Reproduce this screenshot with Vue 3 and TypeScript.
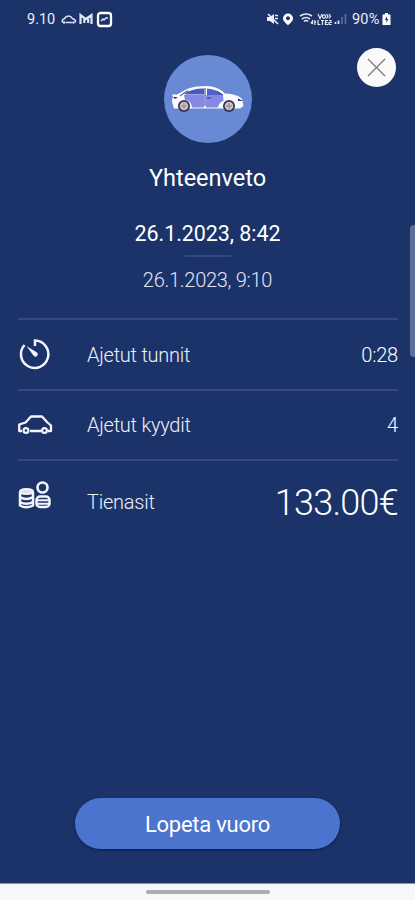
<script setup lang="ts">
interface SummaryRow {
  icon: 'timer' | 'car' | 'coins'
  label: string
  value: string
}

const startTime = '26.1.2023, 8:42'
const endTime = '26.1.2023, 9:10'

const rows: SummaryRow[] = [
  { icon: 'timer', label: 'Ajetut tunnit', value: '0:28' },
  { icon: 'car', label: 'Ajetut kyydit', value: '4' },
  { icon: 'coins', label: 'Tienasit', value: '133.00€' },
]
</script>

<template>
  <div class="screen">
    <header class="status">
      <div class="status-left">
        <span class="clock">9.10</span>
        <svg class="notifications" width="54" height="18" viewBox="0 0 54 18" fill="none" stroke="#dfe4f2">
          <path d="M2.500 12.500Q1.500 9.500 4 9Q6 6 8.500 6Q11 6 12.500 8.700Q16 9.300 15.500 12.500M5.500 12.500H12" stroke-width="1.500" />
          <circle cx="4" cy="12.500" r="1.200" fill="#dfe4f2" stroke="none" />
          <circle cx="13.500" cy="12.500" r="1.200" fill="#dfe4f2" stroke="none" />
          <path d="M20.500 14V5L25.700 9L31.500 5V14M24.300 13V8.500M28.200 13V8.500" stroke-width="2.200" />
          <rect x="38" y="3" width="13" height="13" rx="2.500" stroke="#fff" stroke-width="2.300" />
          <path d="M41 11L43 9L44 10L46 8H48" stroke-width="1.400" />
        </svg>
      </div>
      <div class="status-right">
        <svg width="83" height="18" viewBox="0 0 83 18" fill="none" stroke="#e4e8f4">
          <path d="M1 7H4L8 4V14L4 11H1Z" fill="#f1f3fa" stroke="none" />
          <path d="M2 4L12 14M9 5.500H12M9 8.500H12" stroke-width="1.700" />
          <path d="M22 3.500A5 5 0 0 0 17 8.300C17 11.500 20 13 22 15.500C24 13 27 11.500 27 8.300A5 5 0 0 0 22 3.500ZM22 6.300A2 2 0 1 1 22 10.300A2 2 0 1 1 22 6.300Z" fill="#fff" stroke="none" fill-rule="evenodd" />
          <path d="M34 6Q40 2 46 6M36 9Q40 6 44 9M38 11.500Q40 9.500 42 11.500" stroke-width="1.600" />
          <path d="M46.500 10V14M44.800 12L46.500 14M48.800 15V11L50 12.500" stroke-width="1.200" />
          <path d="M52 4L54 8.500L56 4M60.500 4L62 6.200L60.500 8.500M63 4L64.500 6.200L63 8.500M52 10V14.500H54.500M55 10.500H58M56.500 10.500V15M62 10.500H59.500V14.500H62M59.500 12.500H61.500M63 10.500H65V12.500H63V14.500H65.500" stroke-width="1.200" />
          <circle cx="58" cy="6.500" r="1.600" stroke-width="1.200" />
          <path d="M69.500 14V12M72.500 14V10.500" stroke-width="1.700" />
          <path d="M76 14V7M79.500 14V4" stroke="#596c9f" stroke-width="1.700" />
        </svg>
        <span class="battery-text">90%</span>
        <svg width="9" height="14" viewBox="0 0 9 14">
          <path d="M3 1H6V2.500H8.500V13H.5V2.500H3Z" fill="#fff" />
          <path d="M5 4L3 8H4.500L4 11L6.500 7H5Z" fill="#1c3369" />
        </svg>
      </div>
    </header>

    <button class="close" type="button" aria-label="Sulje">
      <svg width="39" height="39" viewBox="0 0 39 39">
        <path d="M11 11L28 28M28 11L11 28" fill="none" stroke="#777" stroke-width="1.200" />
      </svg>
    </button>

    <main class="content">
      <div class="hero">
        <svg width="88" height="88" viewBox="0 0 88 88">
          <path d="M9 50Q7 45 9 42L8 39.500H13Q19 36 23 34Q30 31 42 31Q54 31 61 38.500Q74 39 78 44L79.500 51L76 53.500H10Z" fill="#fafbff" />
          <path d="M20 39Q27 33.500 40 33.500V39.500H22Z" fill="#4b58c8" />
          <path d="M43 33.500Q53 34 59 40.500H43Z" fill="#5360cc" />
          <path d="M20 40H40V52.500H28Q27 45 21 45ZM42 40H59L59.500 46Q55 47 54 52.500H42Z" fill="#8589e5" />
          <path d="M41 33V51M16 41L24 35.500M43 43H47M53 36.500L59 40" fill="none" stroke="#30368d" />
          <path d="M9 42H14L11 44ZM74 43.500L79 46L74 46Z" fill="#293162" />
          <circle cx="20" cy="51" r="6" fill="#30304f" />
          <circle cx="20" cy="51" r="4.300" fill="#cdbfc9" />
          <circle cx="65" cy="51" r="6" fill="#30304f" />
          <circle cx="65" cy="51" r="4.300" fill="#cdbfc9" />
          <path d="M17 51H23M20 48V54M62 51H68M65 48V54" stroke="#77708a" stroke-width=".7" />
        </svg>
      </div>
      <h1 class="title">Yhteenveto</h1>
      <p class="start">{{ startTime }}</p>
      <div class="dash"></div>
      <p class="end">{{ endTime }}</p>

      <ul class="rows">
        <li v-for="row in rows" :key="row.icon" class="row" :class="row.icon">
          <svg class="row-icon" width="36" height="36" viewBox="0 0 36 36" fill="none" stroke="#f3f5fc">
            <template v-if="row.icon === 'timer'">
              <path d="M18 10V4.500A13.700 13.700 0 1 1 7.500 9" stroke-width="2.500" />
              <path d="M9.500 10L20 16.500A2.300 2.300 0 0 1 16.800 20Z" fill="#f3f5fc" stroke="none" />
            </template>
            <template v-else-if="row.icon === 'car'">
              <path d="M5 24H2.200V17.500L8.500 15.500L14 9.500H25L30.500 15.500L34 18.500V24H31M13 24H24" stroke-width="2.300" stroke-linejoin="round" />
              <circle cx="9" cy="23.500" r="2.400" stroke-width="2.200" />
              <circle cx="27.500" cy="23.500" r="2.400" stroke-width="2.200" />
            </template>
            <template v-else>
              <circle cx="25.500" cy="8.500" r="5" stroke-width="2.600" />
              <path d="M3 13V26.500Q9 30 16 26.500V13M3 18Q9 22 16 18M3 23Q9 26.500 16 23" stroke-width="2.500" />
              <ellipse cx="9.500" cy="12.500" rx="6.500" ry="2.600" fill="#dfe3f1" stroke-width="2" />
              <rect x="19.500" y="17.500" width="13" height="10.500" rx="3.500" stroke-width="2.500" />
              <path d="M20 21.300H32M20 24.700H32" stroke-width="1.900" />
            </template>
          </svg>
          <span class="label">{{ row.label }}</span>
          <span class="value">{{ row.value }}</span>
        </li>
      </ul>

      <button class="finish" type="button">Lopeta vuoro</button>
    </main>

    <footer class="nav"><span class="nav-handle"></span></footer>
    <div class="edge-handle"></div>
  </div>
</template>

<style>
body {
  background: #1c3369;
}
</style>

<style scoped>
.screen {
  position: relative;
  display: flex;
  flex-direction: column;
  width: 415px;
  height: 900px;
  overflow: hidden;
  background: #1c3369;
  color: #fff;
  font-family: Roboto, "Liberation Sans", sans-serif;
}
.status {
  display: flex;
  justify-content: space-between;
  height: 38px;
  padding: 0 24px 0 27px;
  color: #e9edf7;
}
.status-left,
.status-right {
  display: flex;
  align-items: center;
}
.clock {
  width: 33px;
  font-size: 14.5px;
}
.battery-text {
  width: 29px;
  margin: 0 1px 0 3px;
  font-size: 14.5px;
  letter-spacing: 0.2px;
}
.close {
  position: absolute;
  top: 48px;
  left: 357px;
  width: 39px;
  height: 39px;
  padding: 0;
  border: 0;
  border-radius: 50%;
  background: #fafafa;
}
.close svg {
  display: block;
}
.content {
  display: flex;
  flex: 1;
  flex-direction: column;
  align-items: center;
  padding-top: 17px;
}
.hero {
  width: 88px;
  height: 88px;
  border-radius: 50%;
  background: #6889d4;
}
.title,
.start,
.end {
  margin: 0;
  white-space: nowrap;
}
.title {
  margin-top: 20px;
  font-size: 23.5px;
  font-weight: 400;
  line-height: 30px;
}
.start {
  margin-top: 26px;
  font-size: 21.5px;
  letter-spacing: -0.07px;
  line-height: 30px;
}
.dash {
  width: 46px;
  height: 2px;
  margin-top: 6px;
  background: #34497d;
}
.end {
  margin-top: 8px;
  color: #e2e6f3;
  font-size: 20px;
  font-weight: 300;
  letter-spacing: -0.27px;
  line-height: 30px;
}
.rows {
  align-self: stretch;
  margin: 23px 17px 0 18px;
  padding: 0;
  list-style: none;
}
.row {
  display: flex;
  align-items: center;
  box-sizing: border-box;
  height: 70.5px;
  border-top: 2px solid #34497d;
}
.row-icon {
  margin-right: 34px;
  margin-left: -1px;
}
.label {
  flex: 1;
  padding-top: 1px;
  color: #edf0f9;
  font-size: 20px;
  font-weight: 300;
  letter-spacing: -0.25px;
}
.value {
  padding-top: 1px;
  font-size: 20px;
  font-weight: 300;
  letter-spacing: -0.2px;
}
.coins {
  height: 84px;
}
.coins .row-icon {
  margin-bottom: 10px;
}
.coins .label {
  padding-top: 0;
}
.coins .value {
  font-size: 36px;
  letter-spacing: -0.75px;
}
.finish {
  width: 265px;
  height: 51px;
  margin-top: auto;
  margin-bottom: 34px;
  padding: 2px 0 0;
  border: 0;
  border-radius: 26px;
  background: #4b74cf;
  box-shadow: 0 1px 3px #0b1d50;
  color: #fff;
  font-family: inherit;
  font-size: 22px;
  letter-spacing: -0.25px;
}
.nav {
  display: flex;
  justify-content: center;
  height: 10px;
  padding-top: 6px;
  background: #f7f7f7;
  border-top: 1px solid #8994b3;
}
.nav-handle {
  width: 124px;
  height: 4px;
  border-radius: 2px;
  background: #acacac;
}
.edge-handle {
  position: absolute;
  top: 225px;
  right: 0;
  width: 5px;
  height: 132px;
  border-radius: 4px 0 0 4px;
  background: #606f97;
}
</style>
